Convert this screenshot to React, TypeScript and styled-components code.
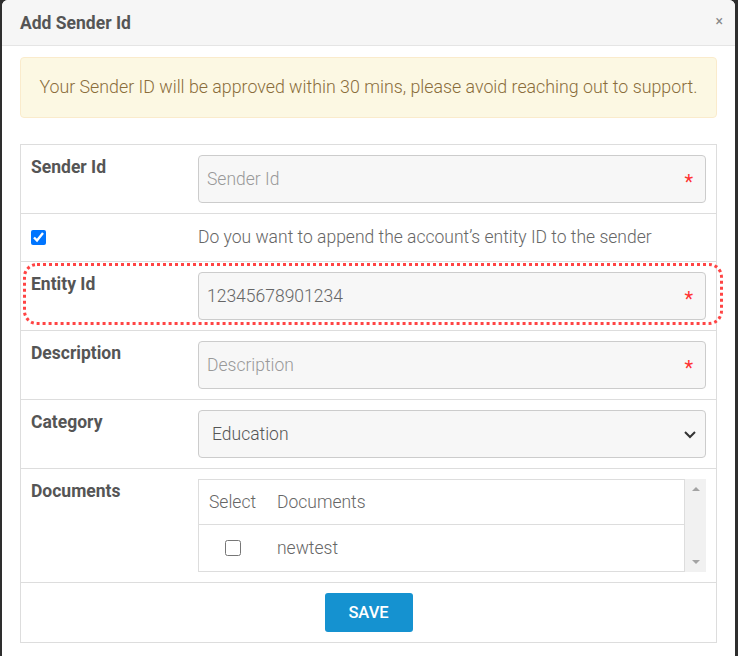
import React from "react";
import styled, { createGlobalStyle } from "styled-components";

const GlobalStyle = createGlobalStyle`
  html, body {
    margin: 0;
    padding: 0;
    background: #2e2e2e;
    font-family: Roboto, "Liberation Sans", Arial, sans-serif;
    overflow: hidden;
  }
  * { box-sizing: border-box; }
`;

const Backdrop = styled.div`
  height: 100vh;
  padding-left: 2px;
`;

const Modal = styled.div`
  width: 733px;
  height: 100%;
  background: #fff;
  border-radius: 6px 6px 0 0;
  overflow: hidden;
`;

const Header = styled.div`
  height: 46px;
  padding: 0 12px 0 18px;
  background: #f6f6f6;
  border-bottom: 1px solid #e5e5e5;
  display: flex;
  align-items: center;
  justify-content: space-between;
`;

const Title = styled.h4`
  margin: 0;
  font-size: 17.5px;
  font-weight: 700;
  color: #555;
`;

const Close = styled.span`
  font-size: 14px;
  color: #888;
  line-height: 1;
  margin-top: -3px;
`;

const Body = styled.div`
  padding: 11px 18px 0;
`;

const Alert = styled.div`
  padding: 17px 10px 18px;
  background: #fcf8e3;
  border: 1px solid #faebcc;
  border-radius: 4px;
  color: #8a6d3b;
  font-size: 17.8px;
  font-weight: 300;
  line-height: 24px;
  text-align: center;
  margin-bottom: 26px;
`;

const FormTable = styled.div`
  border: 1px solid #ddd;
`;

const Row = styled.div<{ $first?: boolean }>`
  position: relative;
  display: grid;
  grid-template-columns: 167px 1fr;
  border-top: ${(p) => (p.$first ? "none" : "1px solid #ddd")};
`;

const Cell = styled.div<{ $center?: boolean }>`
  padding: 10px;
  display: flex;
  align-items: ${(p) => (p.$center ? "center" : "flex-start")};
`;

const FullCell = styled.div`
  grid-column: 1 / span 2;
  padding: 10px;
  display: flex;
  justify-content: center;
`;

const Label = styled.label`
  font-size: 17.5px;
  font-weight: 700;
  color: #555;
  line-height: 25px;
`;

const InputBox = styled.div`
  position: relative;
  width: 100%;
  height: 48px;
  background: #f7f7f7;
  border: 1px solid #ccc;
  border-radius: 4px;
  display: flex;
  align-items: center;
  padding: 0 8px;
  font-size: 17.5px;
  font-weight: 300;
`;

const Value = styled.span<{ $placeholder?: boolean }>`
  flex: 1;
  color: ${(p) => (p.$placeholder ? "#999" : "#666")};
`;

const Required = styled.span`
  color: #f33;
  font-size: 20px;
  font-weight: 400;
  line-height: 1;
  margin-right: 4px;
  margin-top: 6px;
`;

const SelectText = styled.span`
  flex: 1;
  color: #555;
  padding-left: 5px;
`;

const Check = styled.input<{ $size: number }>`
  width: ${(p) => p.$size}px;
  height: ${(p) => p.$size}px;
  margin: 0;
  accent-color: #0075ff;
`;

const CheckText = styled.span`
  font-size: 17.5px;
  font-weight: 300;
  color: #666;
  line-height: 27px;
`;

const Highlight = styled.div`
  position: absolute;
  left: 2px;
  right: -7px;
  top: 1px;
  bottom: 5px;
  border: 3px dotted #f44;
  border-radius: 14px;
  pointer-events: none;
`;

const DocsWrap = styled.div`
  width: 100%;
  height: 93px;
  display: flex;
`;

const DocsList = styled.div`
  flex: 1;
  border: 1px solid #ddd;
`;

const DocsRow = styled.div<{ $head?: boolean }>`
  display: grid;
  grid-template-columns: 68px 1fr;
  height: ${(p) => (p.$head ? "45px" : "46px")};
  border-bottom: ${(p) => (p.$head ? "1px solid #ddd" : "none")};
  align-items: center;
  font-size: 17.5px;
  font-weight: 300;
  color: #666;
`;

const DocsCell = styled.div<{ $center?: boolean }>`
  padding: 0 10px;
  display: flex;
  justify-content: ${(p) => (p.$center ? "center" : "flex-start")};
`;

const Scrollbar = styled.div`
  width: 21px;
  background: #f1f1f1;
  display: flex;
  flex-direction: column;
  justify-content: space-between;
  align-items: center;
  padding: 8px 0;
`;

const Arrow = styled.span<{ $down?: boolean }>`
  width: 0;
  height: 0;
  border-left: 4px solid transparent;
  border-right: 4px solid transparent;
  ${(p) =>
    p.$down ? "border-top: 4px solid #a3a3a3;" : "border-bottom: 4px solid #a3a3a3;"}
`;

const SaveButton = styled.button`
  width: 88px;
  height: 39px;
  border: none;
  border-radius: 3px;
  background: #1592d0;
  color: #fff;
  font-family: inherit;
  font-size: 16.5px;
  font-weight: 500;
`;

const Chevron = () => (
  <svg width="14" height="14" viewBox="0 0 14 14">
    <path d="M2 5 L7 10 L12 5" fill="none" stroke="#333" strokeWidth="2" />
  </svg>
);

export default function App() {
  return (
    <>
      <GlobalStyle />
      <Backdrop>
        <Modal>
          <Header>
            <Title>Add Sender Id</Title>
            <Close>×</Close>
          </Header>
          <Body>
            <Alert>
              Your Sender ID will be approved within 30 mins, please avoid reaching out to support.
            </Alert>
            <FormTable>
              <Row $first>
                <Cell>
                  <Label>Sender Id</Label>
                </Cell>
                <Cell>
                  <InputBox>
                    <Value $placeholder>Sender Id</Value>
                    <Required>*</Required>
                  </InputBox>
                </Cell>
              </Row>
              <Row>
                <Cell $center>
                  <Check type="checkbox" $size={15} defaultChecked />
                </Cell>
                <Cell $center>
                  <CheckText>Do you want to append the account’s entity ID to the sender</CheckText>
                </Cell>
              </Row>
              <Row>
                <Cell>
                  <Label>Entity Id</Label>
                </Cell>
                <Cell>
                  <InputBox>
                    <Value>12345678901234</Value>
                    <Required>*</Required>
                  </InputBox>
                </Cell>
                <Highlight />
              </Row>
              <Row>
                <Cell>
                  <Label>Description</Label>
                </Cell>
                <Cell>
                  <InputBox>
                    <Value $placeholder>Description</Value>
                    <Required>*</Required>
                  </InputBox>
                </Cell>
              </Row>
              <Row>
                <Cell>
                  <Label>Category</Label>
                </Cell>
                <Cell>
                  <InputBox>
                    <SelectText>Education</SelectText>
                    <Chevron />
                  </InputBox>
                </Cell>
              </Row>
              <Row>
                <Cell>
                  <Label>Documents</Label>
                </Cell>
                <Cell>
                  <DocsWrap>
                    <DocsList>
                      <DocsRow $head>
                        <DocsCell>Select</DocsCell>
                        <DocsCell>Documents</DocsCell>
                      </DocsRow>
                      <DocsRow>
                        <DocsCell $center>
                          <Check type="checkbox" $size={16} />
                        </DocsCell>
                        <DocsCell>newtest</DocsCell>
                      </DocsRow>
                    </DocsList>
                    <Scrollbar>
                      <Arrow />
                      <Arrow $down />
                    </Scrollbar>
                  </DocsWrap>
                </Cell>
              </Row>
              <Row>
                <FullCell>
                  <SaveButton>SAVE</SaveButton>
                </FullCell>
              </Row>
            </FormTable>
          </Body>
        </Modal>
      </Backdrop>
    </>
  );
}
